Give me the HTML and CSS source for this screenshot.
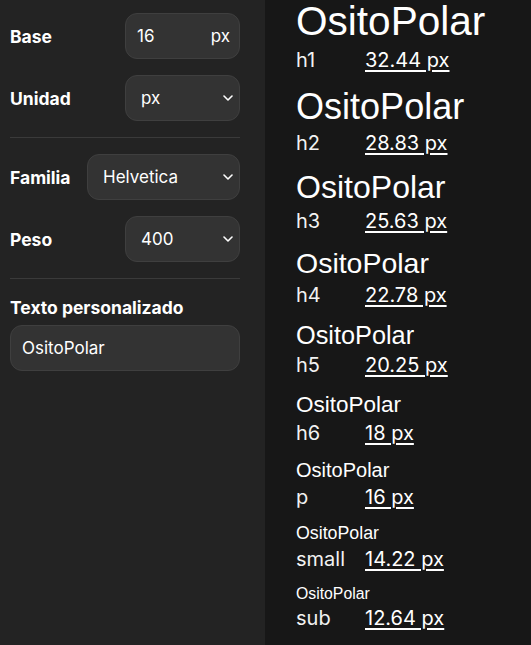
FILE: index.html
```html
<!DOCTYPE html>
<html lang="es">
<head>
<meta charset="utf-8">
<title>Escala tipográfica</title>
<link rel="stylesheet" href="styles.css">
</head>
<body>
<div class="app">
  <aside class="controls">
    <div class="row">
      <label class="lbl" for="base">Base</label>
      <div class="field field-sm field-suffix">
        <input id="base" class="txt" type="text" value="16">
        <span class="suffix">px</span>
      </div>
    </div>
    <div class="row">
      <label class="lbl" for="unit">Unidad</label>
      <div class="field field-sm">
        <select id="unit" class="sel"><option>px</option><option>rem</option><option>em</option></select>
        <svg class="chev" width="10" height="6" viewBox="0 0 10 6"><path d="M1 1l4 4 4-4" fill="none" stroke="#fff" stroke-width="1.6" stroke-linecap="round" stroke-linejoin="round"/></svg>
      </div>
    </div>
    <div class="divider"></div>
    <div class="row">
      <label class="lbl" for="fam">Familia</label>
      <div class="field field-lg">
        <select id="fam" class="sel"><option>Helvetica</option><option>Inter</option><option>Georgia</option></select>
        <svg class="chev" width="10" height="6" viewBox="0 0 10 6"><path d="M1 1l4 4 4-4" fill="none" stroke="#fff" stroke-width="1.6" stroke-linecap="round" stroke-linejoin="round"/></svg>
      </div>
    </div>
    <div class="row">
      <label class="lbl" for="peso">Peso</label>
      <div class="field field-sm">
        <select id="peso" class="sel"><option>400</option><option>500</option><option>700</option></select>
        <svg class="chev" width="10" height="6" viewBox="0 0 10 6"><path d="M1 1l4 4 4-4" fill="none" stroke="#fff" stroke-width="1.6" stroke-linecap="round" stroke-linejoin="round"/></svg>
      </div>
    </div>
    <div class="divider"></div>
    <div class="group">
      <label class="lbl" for="custom">Texto personalizado</label>
      <div class="field field-full">
        <input id="custom" class="txt" type="text" value="OsitoPolar">
      </div>
    </div>
  </aside>
  <main class="preview">
    <div class="item"><div class="sample s-h1">OsitoPolar</div><div class="meta"><span class="tag">h1</span><a class="size" href="#">32.44 px</a></div></div>
    <div class="item"><div class="sample s-h2">OsitoPolar</div><div class="meta"><span class="tag">h2</span><a class="size" href="#">28.83 px</a></div></div>
    <div class="item"><div class="sample s-h3">OsitoPolar</div><div class="meta"><span class="tag">h3</span><a class="size" href="#">25.63 px</a></div></div>
    <div class="item"><div class="sample s-h4">OsitoPolar</div><div class="meta"><span class="tag">h4</span><a class="size" href="#">22.78 px</a></div></div>
    <div class="item"><div class="sample s-h5">OsitoPolar</div><div class="meta"><span class="tag">h5</span><a class="size" href="#">20.25 px</a></div></div>
    <div class="item"><div class="sample s-h6">OsitoPolar</div><div class="meta"><span class="tag">h6</span><a class="size" href="#">18 px</a></div></div>
    <div class="item"><div class="sample s-p">OsitoPolar</div><div class="meta"><span class="tag">p</span><a class="size" href="#">16 px</a></div></div>
    <div class="item"><div class="sample s-small">OsitoPolar</div><div class="meta"><span class="tag">small</span><a class="size" href="#">14.22 px</a></div></div>
    <div class="item"><div class="sample s-sub">OsitoPolar</div><div class="meta"><span class="tag">sub</span><a class="size" href="#">12.64 px</a></div></div>
  </main>
</div>
</body>
</html>
```
FILE: styles.css
```css
* { box-sizing: border-box; }
html, body { margin: 0; padding: 0; height: 100%; }
body {
  background: #171717;
  color: #fff;
  font-family: Inter, "Noto Sans", sans-serif;
  overflow: hidden;
}
.app {
  display: flex;
  height: 645px;
}
.controls {
  width: 265px;
  flex: none;
  background: #232323;
  padding: 13px 25px 0 10px;
  display: flex;
  flex-direction: column;
  gap: 16px;
}
.row {
  display: flex;
  align-items: center;
  justify-content: space-between;
  height: 46px;
}
.lbl {
  font-weight: 700;
  font-size: 17.5px;
  color: #fff;
}
.field {
  position: relative;
  height: 46px;
  background: #333333;
  border: 1px solid #3f3f3f;
  border-radius: 12px;
  display: flex;
  align-items: center;
}
.field-sm { width: 115px; }
.field-lg { width: 153px; }
.field-full { width: 230px; }
.txt, .sel {
  background: transparent;
  border: 0;
  outline: none;
  color: #fff;
  font-family: Inter, "Noto Sans", sans-serif;
  font-size: 17px;
  height: 100%;
  width: 100%;
  padding: 0 0 0 11px;
  margin: 0;
}
.field-suffix .txt { width: auto; flex: 1; min-width: 0; }
.suffix {
  font-size: 17px;
  padding-right: 9px;
  color: #fff;
}
.sel {
  -webkit-appearance: none;
  appearance: none;
  padding-left: 15px;
  cursor: pointer;
}
.sel option { background: #333; color: #fff; }
.chev {
  position: absolute;
  right: 6px;
  top: 50%;
  margin-top: -3px;
  pointer-events: none;
}
.divider {
  height: 1px;
  background: #3a3a3a;
}
.group {
  display: flex;
  flex-direction: column;
  gap: 7px;
  padding-top: 2px;
}

.preview {
  flex: 1;
  padding: 0 0 0 31px;
  display: flex;
  flex-direction: column;
  gap: 11.2px;
}
.sample {
  font-family: "Liberation Sans", Arial, Helvetica, sans-serif;
  color: #fff;
  line-height: normal;
}
.s-h1 { font-size: 40.55px; line-height: 1.05; margin-bottom: 2px; }
.s-h2 { font-size: 36.04px; }
.s-h3 { font-size: 32.04px; }
.s-h4 { font-size: 28.48px; }
.s-h5 { font-size: 25.31px; }
.s-h6 { font-size: 22.5px; }
.s-p { font-size: 20px; }
.s-small { font-size: 17.78px; }
.s-sub { font-size: 15.8px; }
.meta {
  display: grid;
  grid-template-columns: 69px auto;
  justify-content: start;
  font-size: 20px;
  line-height: 30px;
  color: #f2f2f2;
}
.size {
  color: #fff;
  text-decoration: underline;
  text-decoration-thickness: 2px;
  text-underline-offset: 3px;
}
```
